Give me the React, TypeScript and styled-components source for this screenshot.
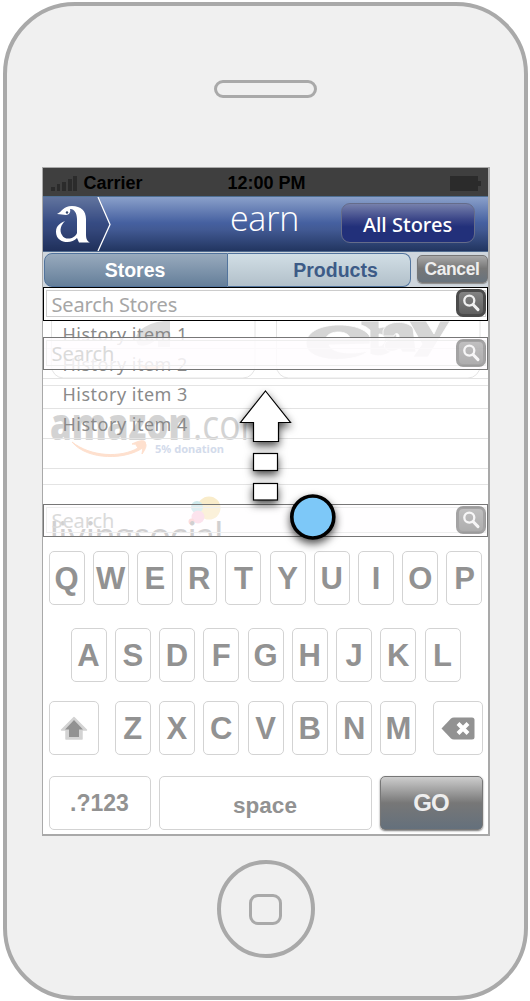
import React from "react";
import styled, { createGlobalStyle } from "styled-components";

const sans = `"Liberation Sans", Arial, sans-serif`;
const human = `"Noto Sans", "Open Sans", sans-serif`;

const GlobalStyle = createGlobalStyle`
  * { box-sizing: border-box; }
  body { margin: 0; background: #fff; font-family: ${sans}; }
`;

const Phone = styled.main`
  width: 525px;
  height: 998px;
  margin: 2px 0 0 3px;
  border: 4px solid #a9a9a9;
  border-radius: 72px;
  background: #f0f0f0;
  display: flex;
  flex-direction: column;
  align-items: center;
`;

const Speaker = styled.div`
  width: 103px;
  height: 18px;
  margin-top: 74px;
  border: 3px solid #a9a9a9;
  border-radius: 9px;
`;

const Screen = styled.section`
  position: relative;
  width: 448px;
  height: 669px;
  margin-top: 69px;
  border: 2px solid #a9a9a9;
  border-top-width: 1px;
  border-left-width: 1px;
  background: #fff;
  display: flex;
  flex-direction: column;
`;

const HomeButton = styled.div`
  width: 98px;
  height: 98px;
  margin-top: 24px;
  border: 4px solid #a9a9a9;
  border-radius: 50%;
  display: grid;
  place-items: center;
`;

const HomeGlyph = styled.div`
  width: 33px;
  height: 31px;
  border: 3px solid #a9a9a9;
  border-radius: 9px;
`;

const StatusBar = styled.div`
  height: 28px;
  flex: none;
  background: #3f3f3f;
  display: grid;
  grid-template-columns: 1fr 76px 1fr;
  align-items: center;
  padding: 2px 7px 0 8px;
  font: bold 18px ${sans};
  color: #000;
  white-space: nowrap;
`;

const Carrier = styled.div`
  display: flex;
  align-items: center;
  gap: 7px;
`;

const Battery = styled.svg`
  justify-self: end;
`;

const NavBar = styled.header`
  height: 56px;
  flex: none;
  display: flex;
  align-items: center;
  border-top: 1px solid #4f6f93;
  border-bottom: 1px solid #4f6a8f;
  background: linear-gradient(#8aa0ca 0%, #4560a0 48%, #425a94 60%, #223560 100%);
  color: #fff;
`;

const LogoMark = styled.svg`
  flex: none;
  width: 69px;
  height: 54px;
`;

const NavTitle = styled.h1`
  margin: 0 0 13px;
  width: 229px;
  padding-left: 77px;
  padding-right: 0;
  text-align: center;
  font: 300 34px/40px "Open Sans", ${human};
  letter-spacing: -0.2px;
`;

const NavAction = styled.button`
  width: 134px;
  height: 40px;
  margin: -2px 0 0 0;
  padding: 2px 0 0;
  border: 1px solid #656c8a;
  border-radius: 9px;
  background: linear-gradient(#7680ac 0%, #3b4688 40%, #22307a 60%, #22307a 100%);
  color: #fff;
  font: 500 20px ${human};
`;

const TabBar = styled.nav`
  height: 35px;
  flex: none;
  display: flex;
  align-items: center;
  padding: 0 0 0 1px;
  background: #cfd6dd;
`;

const Tab = styled.button<{ $active?: boolean }>`
  width: ${(p) => (p.$active ? 184 : 183)}px;
  height: 34px;
  padding: ${(p) => (p.$active ? "1px 1px 0 0" : "1px 0 0 34px")};
  border: 1px solid #52749d;
  border-left-width: ${(p) => (p.$active ? 1 : 0)}px;
  border-radius: ${(p) => (p.$active ? "8px 0 0 8px" : "0 8px 8px 0")};
  background: ${(p) =>
    p.$active ? "linear-gradient(#98aabd, #657f9a)" : "linear-gradient(#d1dee5, #b2c0ca)"};
  color: ${(p) => (p.$active ? "#fff" : "#3d5b87")};
  font: bold 19.5px ${sans};
`;

const CancelButton = styled.button`
  width: 71px;
  height: 28px;
  margin: -1px 0 0 6px;
  padding: 0;
  border: 1px solid #777;
  border-radius: 5px;
  background: linear-gradient(#a9a9a9 0%, #777 48%, #68737d 100%);
  color: #eee;
  font: bold 17.5px ${sans};
  letter-spacing: -0.4px;
  box-shadow: 0 1px 1px #888;
`;

const SearchBox = styled.div<{ $alpha?: number }>`
  height: 34px;
  flex: none;
  border: 1px solid ${(p) => (p.$alpha ? "#777" : "#000")};
  background: ${(p) => (p.$alpha ? `rgba(255, 253, 255, ${p.$alpha})` : "#fff")};
  padding: 2px 2px 3px 2px;
  display: flex;
`;

const FloatingSearch = styled(SearchBox)<{ $top: number }>`
  position: absolute;
  left: 0;
  right: 0;
  top: ${(p) => p.$top}px;
  height: 33px;
`;

const SearchField = styled.div<{ $faded?: boolean }>`
  flex: 1;
  display: flex;
  align-items: center;
  border: 1px solid ${(p) => (p.$faded ? "#eee" : "#ccc")};
  padding: 2px 0 0 5px;
  color: ${(p) => (p.$faded ? "#dadada" : "#a6a6a6")};
  font: 20px/24px ${human};
  letter-spacing: ${(p) => (p.$faded ? -0.1 : -0.15)}px;
`;

const SearchButton = styled.div<{ $faded?: boolean }>`
  width: 30px;
  height: 28px;
  margin: -1px -1px 0 -30px;
  border: 3px solid #4b4b4b;
  border-radius: 7px;
  background: linear-gradient(#838383, #606060);
  opacity: ${(p) => (p.$faded ? 0.5 : 1)};
  display: grid;
  place-items: center;
`;

const Results = styled.div`
  position: relative;
  height: 215px;
  flex: none;
  overflow: hidden;
`;

const StoreBackdrop = styled.svg`
  position: absolute;
  inset: 0;
`;

const HistoryList = styled.ul`
  margin: 0;
  padding: 0;
  list-style: none;
`;

const HistoryRow = styled.li`
  position: relative;
  height: 30px;
  padding: 1px 0 0 20px;
  border-bottom: 1px solid #e3e3e3;
  color: #8a8a8a;
  font: 400 18px/28px ${human};
  letter-spacing: 0.5px;
  &:first-child { height: 28px; line-height: 25px; }
`;

const Keyboard = styled.div`
  display: flex;
  flex-direction: column;
  padding: 15px 5px 0 6px;
`;

const KeyRow = styled.div<{ $gap?: number; $inset?: number }>`
  display: flex;
  justify-content: space-between;
  height: 54px;
  padding: 0 ${(p) => p.$inset ?? 0}px;
  margin-bottom: ${(p) => p.$gap ?? 0}px;
`;

const KeyGroup = styled.div`
  display: flex;
  gap: 8.3px;
`;

const Key = styled.button<{ $w?: number; $size?: number; $shift?: number }>`
  width: ${(p) => p.$w ?? 36}px;
  height: 54px;
  padding: ${(p) => p.$shift ?? 1}px 0 0;
  flex: none;
  display: grid;
  place-items: center;
  border: 1px solid #d3d3d3;
  border-radius: 5px;
  background: #fff;
  color: #929292;
  font: bold ${(p) => p.$size ?? 31}px/1 ${sans};
`;

const GoKey = styled(Key)`
  border: 1px solid #777;
  background: linear-gradient(#cdcdcd 0%, #777 50%, #64707c 100%);
  color: #eee;
  box-shadow: 0 1px 2px #777;
  padding: 0;
  letter-spacing: -1px;
`;

const GestureLayer = styled.svg`
  position: absolute;
  left: 192px;
  top: 218px;
`;

const Magnifier = () => (
  <svg width="20" height="20" viewBox="0 0 20 20" fill="none" stroke="#f0f0f0">
    <circle cx="8.3" cy="7.6" r="5" strokeWidth="2.3" />
    <path d="M12 11.5 L17 16.6" strokeWidth="3" strokeLinecap="round" />
  </svg>
);

const Search = ({ label, top, alpha }: { label: string; top?: number; alpha?: number }) => {
  const parts = (
    <>
      <SearchField $faded={!!alpha}>{label}</SearchField>
      <SearchButton $faded={!!alpha}>
        <Magnifier />
      </SearchButton>
    </>
  );
  return top === undefined ? (
    <SearchBox>{parts}</SearchBox>
  ) : (
    <FloatingSearch $top={top} $alpha={alpha}>
      {parts}
    </FloatingSearch>
  );
};

/* Faded store logos behind the history list */
const Stores = () => (
  <StoreBackdrop width="445" height="215" viewBox="43 321 445 215">
    <g fill="none" stroke="#e4e4e4">
      <path d="M51.5 321V366a12 12 0 0 0 12 12H243a12 12 0 0 0 12-12V321" />
      <path d="M276.500 321V366a12 12 0 0 0 12 12H468a12 12 0 0 0 12-12V321" />
      <path d="M43 385.500H488M43 484.500H488" />
    </g>
    <path d="M139 331Q150 322 164 321H170V347H158V337Q150 348 138 345Q134 338 139 331Z" fill="#dcdcdc" />
    <path d="M140 365Q151 372 164 364" fill="none" stroke="#fdc8a4" strokeWidth="3" />
    <g fill="#d5d5d5" stroke="#fff" strokeWidth=".8" fillRule="evenodd">
      <path d="M306 343C307 331 322 325 339 325C357 325 372 331 372 344L329 345C332 353 350 355 368 351C359 362 306 365 306 343ZM326 338H350C348 330 329 330 326 338Z" />
      <path d="M361 321H379V328C388 325 396 330 397 338C398 350 384 360 370 354V330Q366 326 361 325ZM379 334V346C386 346 387 334 379 334Z" />
      <path d="M383 331C386 320 407 320 413 328L416 352H402L400 348C391 356 379 348 387 341L399 338C400 333 395 332 394 336H383Z" />
      <path d="M409 321H426L434 334L440 321H450L428 357H413L422 344Z" />
    </g>
    <text x="50" y="440" textLength="142" lengthAdjust="spacingAndGlyphs" fill="#d3d3d3" fontFamily="Open Sans" fontWeight="800" fontSize="45">amazon</text>
    <text x="193" y="440" textLength="80" lengthAdjust="spacingAndGlyphs" fill="#d3d3d3" fontFamily="Open Sans" fontWeight="400" fontSize="42">.com</text>
    <path d="M72 442C91 457 121 458 138 448L136 445C145 440 150 443 142 454C144 444 142 445 132 444C144 438 148 441 144 447C127 460 88 461 72 442Z" fill="#fee0ce" stroke="#fee0ce" strokeWidth="1" />
    <text x="155" y="453" textLength="69" lengthAdjust="spacingAndGlyphs" fill="#d3dbeb" fontFamily="Noto Sans" fontWeight="700" fontSize="11">5% donation</text>
    <circle cx="209" cy="508" r="11.500" fill="#f9ecca" />
    <circle cx="197" cy="507" r="6" fill="#cfeaec" />
    <circle cx="198" cy="517" r="6.500" fill="#fbd9e6" />
    <circle cx="191.500" cy="521.500" r="3" fill="#fbd2d2" />
    <text x="50" y="546.5" textLength="173" lengthAdjust="spacingAndGlyphs" fill="#bdbdbd" fontFamily="Lato" fontSize="35">livingsocial</text>
  </StoreBackdrop>
);

const Swipe = () => (
  <GestureLayer width="110" height="170" viewBox="235 386 110 170">
    <g fill="#fff" stroke="#000" strokeWidth="1.200" style={{ filter: "drop-shadow(0 4px 4px rgba(0,0,0,.7))" }}>
      <path d="M265.500 391L290.500 422.500H278.500V441.500H253.500V422.500H240.500Z" />
      <rect x="253.500" y="453.500" width="24" height="17" />
      <rect x="253.500" y="483.500" width="24" height="16.500" />
      <circle cx="312.800" cy="517" r="21" fill="#7dc8f8" strokeWidth="3.600" />
    </g>
  </GestureLayer>
);

const history = ["History item 1", "History item 2", "History item 3", "History item 4", ""];

export default function App() {
  return (
    <>
      <GlobalStyle />
      <Phone>
        <Speaker />
        <Screen>
          <StatusBar>
            <Carrier>
              <svg width="26" height="16" fill="#2b2b2b">
                <path d="M0 12h4v4H0zM6 9h3v7H6zM11 7h4v9h-4zM17 4h4v12h-4zM22 1h4v15h-4z" />
              </svg>
              <span>Carrier</span>
            </Carrier>
            <span>12:00 PM</span>
            <Battery width="31" height="15" fill="#2b2b2b">
              <path d="M0 0H28V5H31V10H28V15H0Z" />
            </Battery>
          </StatusBar>
          <NavBar>
            <LogoMark viewBox="0 0 69 54">
              <path d="M0 0H56L67 27L56 54H0Z" fill="#1c2850" opacity=".36" />
              <path d="M55 0L67 27.500L55 54" fill="none" stroke="#fff" strokeWidth="1.300" />
              <path
                fill="#fff"
                d="M14 17C19 15 20 9 29 9C38 9 43 14 43 22V37C43 42 44 44 47 45.500H36L34 41C28 48 13 46 13 35C13 28 18 26 22 24C18 28 16 33 19 38C22 44 32 42 34 36V22C34 16 31 11.500 27 12C28 15 26 18 23 18C20 18 18 17 14 17Z"
              />
              <circle cx="24" cy="15.500" r="1.200" fill="#33466f" />
            </LogoMark>
            <NavTitle>earn</NavTitle>
            <NavAction>All Stores</NavAction>
          </NavBar>
          <TabBar>
            <Tab $active>Stores</Tab>
            <Tab>Products</Tab>
            <CancelButton>Cancel</CancelButton>
          </TabBar>
          <Search label="Search Stores" />
          <Results>
            <Stores />
            <HistoryList>
              {history.map((item, i) => (
                <HistoryRow key={i}>{item}</HistoryRow>
              ))}
            </HistoryList>
          </Results>
          <Search label="Search" top={169} alpha={0.85} />
          <Search label="Search" top={336} alpha={0.3} />
          <Keyboard>
            <KeyRow $gap={23}>
              {[..."QWERTYUIOP"].map((k) => (
                <Key key={k}>{k}</Key>
              ))}
            </KeyRow>
            <KeyRow $gap={19} $inset={22}>
              {[..."ASDFGHJKL"].map((k) => (
                <Key key={k}>{k}</Key>
              ))}
            </KeyRow>
            <KeyRow $gap={21}>
              <Key $w={50} $shift={0}>
                <svg width="28" height="25" viewBox="0 0 28 25" strokeLinejoin="round">
                  <path d="M14 1.500L26.500 14H22V23H6V14H1.500Z" fill="#d3d3d3" stroke="#d3d3d3" strokeWidth="1.500" />
                  <path d="M14 4L23 13.500H19V21H9V13.500H5Z" fill="#929292" />
                </svg>
              </Key>
              <KeyGroup>
                {[..."ZXCVBNM"].map((k) => (
                  <Key key={k}>{k}</Key>
                ))}
              </KeyGroup>
              <Key $w={50} $shift={0}>
                <svg width="34" height="23" viewBox="0 0 34 23">
                  <path d="M0.500 11.500L10 1.500Q11 0.500 13 0.500H31Q33.500 0.500 33.500 3V20Q33.500 22.500 31 22.500H13Q11 22.500 10 21.500Z" fill="#929292" />
                  <path d="M17 6.500L27 16.500M27 6.500L17 16.500" stroke="#fff" strokeWidth="4" />
                </svg>
              </Key>
            </KeyRow>
            <KeyRow>
              <Key $w={102} $size={23}>.?123</Key>
              <Key $w={213} $size={22.5} $shift={7}>space</Key>
              <GoKey $w={103} $size={24}>GO</GoKey>
            </KeyRow>
          </Keyboard>
          <Swipe />
        </Screen>
        <HomeButton>
          <HomeGlyph />
        </HomeButton>
      </Phone>
    </>
  );
}
